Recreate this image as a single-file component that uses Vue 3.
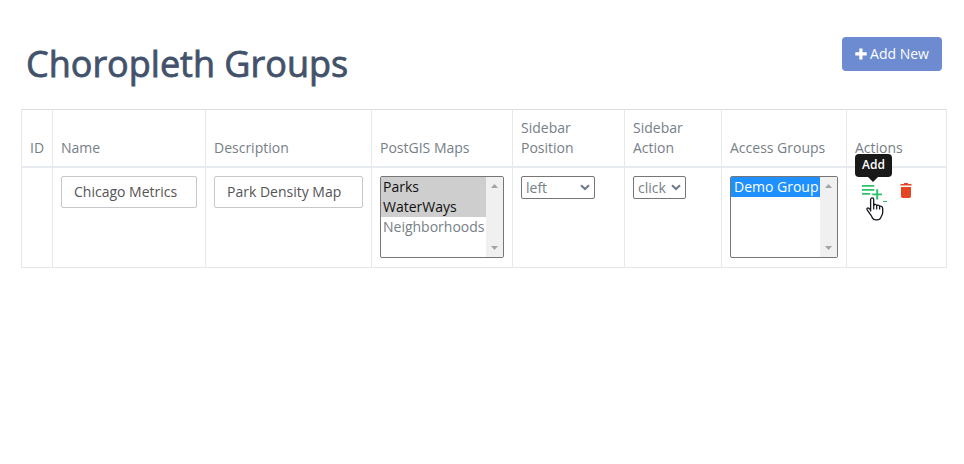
<script setup>
import { ref } from 'vue'

const headers = ['ID', 'Name', 'Description', 'PostGIS Maps', 'Sidebar Position', 'Sidebar Action', 'Access Groups', 'Actions']
const name = ref('Chicago Metrics')
const description = ref('Park Density Map')
const maps = [
  { label: 'Parks', selected: true },
  { label: 'WaterWays', selected: true },
  { label: 'Neighborhoods', selected: false },
]
</script>

<template>
  <main class="page">
    <header class="top">
      <h1>Choropleth Groups</h1>
      <button class="add-new">
        <svg width="12" height="12" viewBox="0 0 12 12"><path d="M4.3 0.4h3.2v3.8h4.2v3.2H7.5v4.2H4.3V7.4H0.3V4.2h4z" fill="#fff" /></svg>
        <span>Add New</span>
      </button>
    </header>

    <section class="grid">
      <div v-for="h in headers" :key="h" class="th"><span>{{ h }}</span></div>

      <div class="td"></div>
      <div class="td"><input v-model="name" class="field" /></div>
      <div class="td"><input v-model="description" class="field" /></div>
      <div class="td">
        <div class="list">
          <ul>
            <li v-for="m in maps" :key="m.label" :class="{ picked: m.selected }">{{ m.label }}</li>
          </ul>
          <div class="scroll">
            <svg width="7" height="4" viewBox="0 0 7 4"><path d="M0 4L3.5 0L7 4z" /></svg>
            <svg width="7" height="4" viewBox="0 0 7 4"><path d="M0 0L3.5 4L7 0z" /></svg>
          </div>
        </div>
      </div>
      <div class="td">
        <div class="select position">
          <span>left</span>
          <svg width="10" height="7" viewBox="0 0 10 7"><path d="M1 1.2L5 5L9 1.2" /></svg>
        </div>
      </div>
      <div class="td">
        <div class="select action">
          <span>click</span>
          <svg width="10" height="7" viewBox="0 0 10 7"><path d="M1 1.2L5 5L9 1.2" /></svg>
        </div>
      </div>
      <div class="td">
        <div class="list groups">
          <ul>
            <li class="active">Demo Group</li>
          </ul>
          <div class="scroll">
            <svg width="7" height="4" viewBox="0 0 7 4"><path d="M0 4L3.5 0L7 4z" /></svg>
            <svg width="7" height="4" viewBox="0 0 7 4"><path d="M0 0L3.5 4L7 0z" /></svg>
          </div>
        </div>
      </div>
      <div class="td actions">
        <div class="add">
          <svg class="playlist" width="20" height="15" viewBox="0 0 20 15"><path d="M0 0h12.3v1.8H0zM0 4h12.3v1.8H0zM0 8h8.2v1.8H0zM14.2 4.2h2v4.2h4v1.8h-4v4.2h-2v-4.2h-4V8.4h4z" fill="#2cc36b" /></svg>
          <div class="tip">Add</div>
          <i class="dash"></i>
          <svg class="cursor" width="18" height="24" viewBox="0 0 18 24"><path d="M4.6 14.6V2.6C4.6 .4 7.7 .4 7.7 2.6V8.5C8 6.7 10.6 6.9 10.7 8.9C11.2 7.5 13.5 7.9 13.6 9.7C14.3 8.7 16.7 9.2 16.7 11.2V15.5C16.7 18 15.1 19.2 14.8 20.6Q14 22.8 11 22.8H9.8Q7.3 22.8 6.2 20.6C5.8 19.3 4.5 17.7 3.3 15.8L1.2 12.9C.3 11.4 1.8 10.2 3.1 11.4L4.6 13" fill="#fff" stroke="#15151f" stroke-width="1.3" stroke-linejoin="round" /><path d="M7.7 8v4.4M10.7 9v3.4M13.6 10v2.6" fill="none" stroke="#15151f" stroke-width="1.2" /></svg>
        </div>
        <svg class="trash" width="12" height="15" viewBox="0 0 12 15"><path d="M.5 1H3.6L4.4 0H7.6L8.4 1H11.5V2.6H.5zM1 4h10v9.2Q11 15 9.2 15H2.8Q1 15 1 13.2z" fill="#e64524" /></svg>
      </div>
    </section>
  </main>
</template>

<style>
body { background: #fff; }
</style>

<style scoped>
* { box-sizing: border-box; }
.page {
  width: 964px;
  height: 464px;
  padding: 37px 17px 0 21px;
  font: 14px/20px "Open Sans", "Noto Sans", sans-serif;
  color: #768087;
}
.top {
  display: flex;
  justify-content: space-between;
  align-items: flex-start;
  height: 72px;
  padding: 0 5px;
}
h1 {
  margin: 6px 0 0;
  font-size: 36px;
  line-height: 42px;
  font-weight: 400;
  color: #43526b;
  -webkit-text-stroke: 0.8px #43526b;
  white-space: nowrap;
}
.add-new {
  display: flex;
  align-items: center;
  justify-content: center;
  gap: 3px;
  width: 100px;
  height: 34px;
  padding: 0;
  border: 0;
  border-radius: 4px;
  background: #6c8bd0;
  color: #fff;
  font: inherit;
}
.grid {
  display: grid;
  width: 926px;
  grid-template-columns: 31px 153px 166px 141px 112px 97px 125px 101px;
  grid-template-rows: 59px 100px;
}
.th, .td {
  border-left: 1px solid #e7e8ea;
  padding: 8px;
}
.th {
  display: flex;
  align-items: flex-end;
  border-top: 1px solid #dddddd;
  border-bottom: 2px solid #e7ebf0;
}
.td { border-bottom: 1px solid #e4e6e8; }
.th:nth-child(8n), .td:last-child { border-right: 1px solid #e7e8ea; }
.field {
  display: block;
  width: 100%;
  height: 32px;
  padding: 0 12px 2px;
  border: 1px solid #c6c8c9;
  border-radius: 2px;
  background: #fff;
  color: #555;
  font: inherit;
  outline: 0;
}
.list {
  display: flex;
  width: 124px;
  height: 82px;
  border: 1px solid #767676;
  border-radius: 2px;
  background: #fff;
  overflow: hidden;
}
.list ul {
  flex: 1;
  min-width: 0;
  margin: 0;
  padding: 0;
  list-style: none;
}
.list li { height: 20px; padding-left: 2px; white-space: nowrap; }
.list.groups { width: 108px; }
.list .picked { background: #cecece; color: #101010; }
.list .active { background: #1e90ff; color: #fff; padding-left: 3px; }
.scroll {
  flex: none;
  display: flex;
  flex-direction: column;
  justify-content: space-between;
  align-items: center;
  width: 17px;
  padding: 7px 0;
  background: #f0f0f0;
  fill: #a3a3a3;
}
.select {
  display: flex;
  align-items: center;
  justify-content: space-between;
  height: 23px;
  padding: 0 4px 0 4px;
  border: 1px solid #767676;
  border-radius: 2px;
}
.select svg { fill: none; stroke: #6f7b88; stroke-width: 2; }
.position { width: 74px; }
.action { width: 53px; }
.actions {
  display: flex;
  align-items: flex-start;
  gap: 18px;
  padding: 16px 8px 0 15px;
}
.add { position: relative; width: 20px; height: 15px; }
.playlist { display: block; margin-top: 1px; }
.trash { display: block; margin-top: -1px; }
.tip {
  position: absolute;
  left: -7px;
  top: -30px;
  width: 37px;
  height: 23px;
  border-radius: 4px;
  background: #191919;
  color: #fff;
  font-size: 12px;
  font-weight: 600;
  line-height: 22px;
  text-align: center;
}
.tip::after {
  content: "";
  position: absolute;
  left: 13px;
  top: 23px;
  border: 5px solid transparent;
  border-bottom: 0;
  border-top-color: #191919;
}
.dash { position: absolute; left: 21px; top: 17px; width: 4px; height: 1px; background: #2cc36b; }
.cursor { position: absolute; left: 4px; top: 13px; }
</style>
